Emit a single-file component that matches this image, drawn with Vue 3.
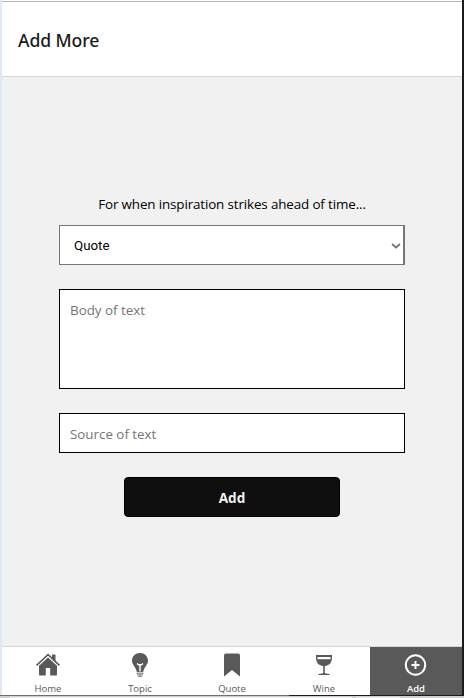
<script setup>
import { ref } from 'vue'

const kind = ref('Quote')
const body = ref('')
const source = ref('')
const active = ref('Add')
const tabs = ['Home', 'Topic', 'Quote', 'Wine', 'Add']
</script>

<template>
  <div class="window">
    <div class="screen">
      <header class="header"><h1>Add More</h1></header>
      <main class="content">
        <form class="form" @submit.prevent>
          <p class="intro"><span>For when inspiration strikes ahead of time...</span></p>
          <div class="select-wrap">
            <select v-model="kind" class="select">
              <option>Quote</option>
              <option>Topic</option>
              <option>Wine</option>
            </select>
            <svg class="chevron" width="10" height="6" viewBox="0 0 10 6">
              <path d="M1 1l4 3.5L9 1" fill="none" stroke="#757575" stroke-width="1.7" />
            </svg>
          </div>
          <textarea v-model="body" class="field area" placeholder="Body of text"></textarea>
          <input v-model="source" class="field line" placeholder="Source of text" />
          <button class="submit">Add</button>
        </form>
      </main>
      <nav class="nav">
        <a v-for="t in tabs" :key="t" class="tab" :class="{ active: t === active }" @click="active = t">
          <svg v-if="t === 'Home'" class="icon" viewBox="0 0 24 24">
            <path d="M16 1.500H19.500V9L16 6z" fill="currentColor" />
            <path d="M12 4.200L3 12.600V21.500q0 1 1 1H9.800V15H14.200V22.500H20q1 0 1-1V12.600z" fill="currentColor" />
            <path d="M.6 12.400L12 1.600l11.400 10.800" fill="none" stroke="currentColor" stroke-width="1.600" />
            <path d="M1.600 13.600L12 3.700 22.400 13.600" fill="none" stroke="#fff" stroke-width=".9" />
          </svg>
          <svg v-else-if="t === 'Topic'" class="icon" viewBox="0 0 24 24">
            <path d="M12 0C7.400 0 4 3.400 4 7.800c0 4.100 4 6.200 4.800 11.200h6.400C16 14 20 11.900 20 7.800 20 3.400 16.600 0 12 0z" fill="currentColor" />
            <path d="M12 18.500V11.500M9 10.500l1.500 1.200h3L15 10.500" fill="none" stroke="#fff" stroke-width="1.400" />
            <path d="M8.500 20.200h7M9 21.900h6M10.300 23.400h3.400" stroke="currentColor" stroke-width=".9" />
          </svg>
          <svg v-else-if="t === 'Quote'" class="icon" viewBox="0 0 24 24">
            <path d="M6 0.500h12q2 0 2 2V23.500l-8-6.500-8 6.500V2.500q0-2 2-2z" fill="currentColor" />
          </svg>
          <svg v-else-if="t === 'Wine'" class="icon" viewBox="0 0 24 24">
            <path d="M4 2h16v2.500c0 5-2.500 8-7.200 8.400v7.400l4.700.7v1h-11v-1l4.700-.7v-7.400C6.500 12.500 4 9.500 4 4.500z" fill="currentColor" />
            <path d="M5.500 4h13V6.200h-13z" fill="#fff" />
          </svg>
          <svg v-else class="icon" viewBox="0 0 24 24">
            <circle cx="11.500" cy="12" r="9.700" fill="none" stroke="currentColor" stroke-width="2" />
            <path d="M11.500 8v8M7.500 12h8" stroke="currentColor" stroke-width="2" />
          </svg>
          <span class="label">{{ t }}</span>
        </a>
      </nav>
    </div>
    <div class="frame-edge"></div>
    <div class="frame-base"><i class="b1"></i><i class="b2"></i><i class="b3"></i><i class="b4"></i></div>
  </div>
</template>

<style>
body {
  margin: 0;
  overflow: hidden;
}
</style>

<style scoped>
* {
  box-sizing: border-box;
}
.window {
  width: 464px;
  height: 698px;
  display: flex;
  flex-direction: column;
  font-family: "Open Sans", "Noto Sans", sans-serif;
  background: #fff;
}
.screen {
  height: 695px;
  display: flex;
  flex-direction: column;
  border-left: 2px solid #dfe9f4;
  border-right: 2px solid #1b1b1b;
  padding-top: 1px;
}
.header {
  height: 76px;
  flex: none;
  display: flex;
  align-items: center;
  padding-left: 16px;
  border-top: 1px solid #b2b7bc;
  border-bottom: 1px solid #d5d5d5;
}
h1 {
  margin: 0;
  padding-top: 2px;
  font-family: "Noto Sans", "Open Sans", sans-serif;
  font-size: 17.6px;
  font-weight: 500;
  letter-spacing: -0.1px;
  line-height: 24px;
  color: #1b1b1b;
}
.content {
  flex: 1;
  background: #f1f1f1;
  padding: 117px 57px 0;
}
.form {
  display: flex;
  flex-direction: column;
  align-items: center;
}
.intro {
  margin: 0;
  height: 31px;
  line-height: 21px;
  font-size: 13.4px;
  letter-spacing: -0.13px;
  color: #000;
  white-space: nowrap;
}
.select-wrap {
  position: relative;
  width: 100%;
  height: 40px;
  margin-bottom: 24px;
}
.select {
  display: block;
  appearance: none;
  width: 100%;
  height: 40px;
  border: 1px solid #767676;
  border-right-width: 2px;
  border-radius: 0;
  padding: 0 14px;
  background: #fff;
  color: #000;
  font: 13.33px Roboto, sans-serif;
  outline: none;
}
.chevron {
  position: absolute;
  right: 4px;
  top: 18px;
}
.field {
  display: block;
  width: 100%;
  border: 1px solid #000;
  border-radius: 0;
  background: #fff;
  font-family: inherit;
  font-size: 13.4px;
  letter-spacing: -0.02px;
  line-height: 20px;
  padding: 10px;
  resize: none;
  outline: none;
  margin: 0 0 24px;
}
.field::placeholder {
  color: #757575;
}
.area {
  height: 100px;
}
.line {
  height: 40px;
  padding: 11px 10px 9px;
}
.submit {
  width: 216px;
  height: 40px;
  border: 1px solid #000;
  border-radius: 4px;
  background: #0f0f0f;
  color: #f1f1f1;
  font: 700 13.6px "Open Sans", sans-serif;
  padding-top: 1px;
}
.nav {
  height: 49px;
  flex: none;
  display: flex;
  border-top: 1px solid #d5d5d5;
}
.tab {
  flex: 1;
  display: flex;
  flex-direction: column;
  align-items: center;
  padding-top: 6px;
  color: #595959;
  cursor: pointer;
}
.icon {
  display: block;
  width: 24px;
  height: 24px;
  flex: none;
}
.label {
  font-size: 9.5px;
  line-height: 14px;
  margin-top: 5px;
}
.active {
  background: #595959;
  color: #fff;
}
.active .label {
  font-weight: 600;
  letter-spacing: -0.1px;
}
.frame-edge {
  height: 1px;
  background: linear-gradient(90deg, #6e6e6e 289px, #1b1b1b 289px);
}
.frame-base {
  height: 2px;
  display: flex;
  background: #d0d0d0;
}
.b1 {
  width: 10px;
}
.b2 {
  width: 342px;
  margin-top: 1px;
  background: #f1f1f1;
}
.b3 {
  width: 4px;
}
.b4 {
  width: 44px;
  margin-top: 1px;
  background: #eee;
}
</style>
